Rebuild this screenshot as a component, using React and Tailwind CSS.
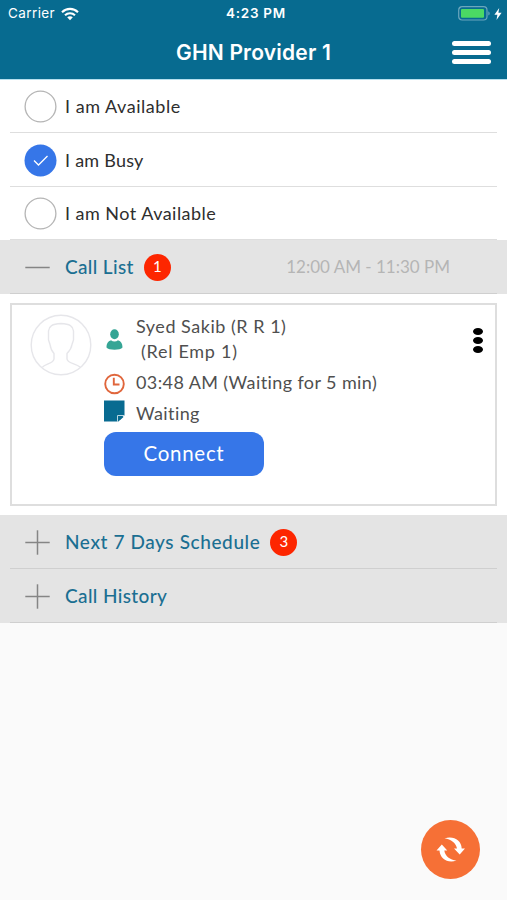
import { useState } from 'react'

const statuses = [
  { label: 'I am Available', row: 'h-[53px]', tracking: 'tracking-[0.54px]' },
  { label: 'I am Busy', row: 'h-[54px] pt-px', tracking: 'tracking-[0.25px]' },
  { label: 'I am Not Available', row: 'h-[53px] pt-px', tracking: 'tracking-[0.47px]' },
]

function StatusBar() {
  return (
    <div className="grid h-[27px] grid-cols-3 items-center pl-2 pr-[5px] font-['Inter',sans-serif] text-[13px]">
      <div className="flex items-center gap-[6px]">
        <span className="text-[13.5px] tracking-[0.4px]">Carrier</span>
        <svg width="18" height="14" viewBox="0 0 18 14" fill="none" stroke="white" strokeWidth="2.1">
          <path d="M1 5.2C5.5 0.8 12.5 0.8 17 5.2" />
          <path d="M4 8.2C6.8 5.5 11.2 5.5 14 8.2" />
          <path d="M9 13.2L6.2 10.3C7.8 8.9 10.2 8.9 11.8 10.3Z" fill="white" stroke="none" />
        </svg>
      </div>
      <span className="pl-0.5 text-center text-[13.5px] font-semibold tracking-[0.7px]">4:23 PM</span>
      <div className="flex items-center justify-end gap-[3px]">
        <svg width="33" height="15" viewBox="0 0 33 15">
          <rect x="0.7" y="0.7" width="28.3" height="13.3" rx="3.5" fill="none" stroke="#6ba6bd" strokeWidth="1.2" />
          <rect x="3" y="3" width="23" height="8.8" rx="1" fill="#4bd964" />
          <path d="M30.3 5.2C32.2 6 32.2 8.7 30.3 9.5Z" fill="#6ba6bd" />
        </svg>
        <svg width="8" height="12" viewBox="0 0 8 12" fill="white">
          <path d="M5.2 0L0.4 6.8H3.4L2.5 12L7.6 4.8H4.4Z" />
        </svg>
      </div>
    </div>
  )
}

function Header() {
  return (
    <header className="h-[79px] bg-[#076b90] text-white">
      <StatusBar />
      <div className="grid h-[51px] grid-cols-[56px_1fr_56px] items-center">
        <span />
        <h1 className="text-center font-['Inter',sans-serif] text-[21px] font-semibold tracking-[0.2px]">GHN Provider 1</h1>
        <button className="flex flex-col gap-1 pl-px" aria-label="Menu">
          <span className="h-[5px] w-[39px] rounded-full bg-white" />
          <span className="h-[5px] w-[39px] rounded-full bg-white" />
          <span className="h-[5px] w-[39px] rounded-full bg-white" />
        </button>
      </div>
    </header>
  )
}

function SectionRow({ title, open, count, range, tracking }) {
  return (
    <div className="bg-[#e4e4e4] px-[10px]">
      <div className="flex h-[54px] items-center border-b border-[#cfcfcf] pl-[15px] pt-px">
        <svg width="25" height="25" viewBox="0 0 25 25" stroke="#858585" strokeWidth="1.5">
          <path d="M0.3 12.5H24.7" />
          {!open && <path d="M12.5 0.3V24.7" />}
        </svg>
        <h2 className={`ml-[15px] text-[19px] font-medium text-[#1b6f92] ${tracking}`}>{title}</h2>
        {count && (
          <span className="ml-[10px] flex size-[27px] items-center justify-center rounded-full bg-[#fd2600] pb-px text-[15px] text-white">{count}</span>
        )}
        {range && <span className="ml-auto mr-[47px] text-[17px] text-[#b5b5b5]">{range}</span>}
      </div>
    </div>
  )
}

function CallCard() {
  return (
    <div className="bg-white px-[10px] py-[9px]">
      <div className="flex h-[203px] border-2 border-[#dedede] pl-[18px] pt-[9px] pr-3 text-[18px] leading-[25px] text-[#4f4f4f]">
        <svg className="shrink-0" width="62" height="62" viewBox="0 0 62 62" fill="none" stroke="#e6e6ea" strokeWidth="1.4">
          <circle cx="31" cy="31" r="29.8" />
          <path d="M12.500 53C16 49.500 23.500 49.500 24 45V39.500C21 36.500 20.500 34 20 30.500L18.500 26V17C19 12 22 10 31 9.500C40 10 43 12 43.500 17V26L42 30.500C41.500 34 40 36.500 37 39.500V45C37.500 49.500 46 49.500 50 53" />
        </svg>

        <div className="ml-[12px] flex-1">
          <div className="flex">
            <svg className="mt-[15px]" width="22" height="22" viewBox="0 0 22 22" fill="#35a595">
              <ellipse cx="10.500" cy="5.300" rx="4.300" ry="5" />
              <path d="M2.500 18.500C2.500 14 4.500 12.200 7 11.300C9 13 12 13 14 11.300C16.500 12.200 18.500 14 18.500 18.500C16.500 21.500 4.500 21.500 2.500 18.500Z" />
            </svg>
            <div className="ml-[10px]">
              <p className="tracking-[0.52px]">Syed Sakib (R R 1)</p>
              <p className="pl-[5px] tracking-[0.72px]">(Rel Emp 1)</p>
            </div>
          </div>
          <div className="mt-[6px] flex">
            <svg className="mt-[3px]" width="22" height="22" viewBox="0 0 22 22" fill="none" stroke="#e0663c" strokeWidth="1.900">
              <circle cx="10.500" cy="11" r="9.300" />
              <path d="M9.800 4.800V11.500H15.500" />
            </svg>
            <p className="ml-[10px] tracking-[0.4px]">03:48 AM (Waiting for 5 min)</p>
          </div>
          <div className="mt-[5px] flex">
            <svg width="22" height="22" viewBox="0 0 22 22">
              <path d="M0 0.500H20.500V15L14.500 21.500H0Z" fill="#086b91" />
              <path d="M13.500 22V15.500H21" fill="none" stroke="#b9d5df" strokeWidth="1" />
              <path d="M15.500 20.500V17H19.500Z" fill="#086b91" />
            </svg>
            <p className="ml-[10px] pt-px tracking-[0.4px]">Waiting</p>
          </div>
          <button className="mt-[6px] flex h-[44px] w-[160px] items-center justify-center rounded-xl bg-[#3676e8] pb-[1px] text-[20.5px] tracking-[0.7px] text-white">
            Connect
          </button>
        </div>

        <button className="mt-[14px] flex flex-col gap-[2px] self-start" aria-label="More">
          <span className="h-[7px] w-[10px] rounded-[50%] bg-black" />
          <span className="h-[7px] w-[10px] rounded-[50%] bg-black" />
          <span className="h-[7px] w-[10px] rounded-[50%] bg-black" />
        </button>
      </div>
    </div>
  )
}

export default function App() {
  const [status, setStatus] = useState('I am Busy')

  return (
    <div className="flex h-[900px] w-[507px] flex-col overflow-hidden bg-[#fafafa] font-['Lato',sans-serif]">
      <Header />

      {/* Availability */}
      <div className="border-t border-[#b5e0ef] bg-white px-[10px]">
        {statuses.map(({ label, row, tracking }) => (
          <button
            key={label}
            onClick={() => setStatus(label)}
            className={`flex w-full items-center border-b border-[#dedede] pl-[14px] text-[18px] text-[#2e2e2e] ${row}`}
          >
            {status === label ? (
              <svg width="33" height="33" viewBox="0 0 33 33" fill="none">
                <circle cx="16.500" cy="16.500" r="16" fill="#3676e8" />
                <path d="M10 16.500L14.500 21L23.500 12" stroke="white" strokeWidth="1.300" />
              </svg>
            ) : (
              <svg width="33" height="33" viewBox="0 0 33 33" fill="none">
                <circle cx="16.500" cy="16.500" r="15.400" stroke="#b5b5b5" strokeWidth="1.300" />
              </svg>
            )}
            <span className={`ml-[8px] ${tracking}`}>{label}</span>
          </button>
        ))}
      </div>

      <SectionRow title="Call List" open count={1} range="12:00 AM - 11:30 PM" tracking="tracking-[0.35px]" />
      <CallCard />
      <SectionRow title="Next 7 Days Schedule" count={3} tracking="tracking-[0.6px]" />
      <SectionRow title="Call History" tracking="tracking-[0.38px]" />

      {/* Refresh */}
      <button
        className="mb-[21px] ml-auto mr-[27px] mt-auto flex size-[59px] items-center justify-center rounded-full bg-[#f67036]"
        aria-label="Refresh"
      >
        <svg width="30" height="26" viewBox="0 0 30 26" fill="white">
          <path d="M8.500 1.500C17 -1.500 25.500 3 25.700 11.500H29L23.700 17.500L18 11.500H21C20 6 15 2 8.500 1.500Z" />
          <path d="M20.500 23.500C12 26.500 4 22 3.500 13.500H0.500L5.800 7.500L11.300 13.500H8.300C9 19 14 23 20.500 23.500Z" />
        </svg>
      </button>
    </div>
  )
}
